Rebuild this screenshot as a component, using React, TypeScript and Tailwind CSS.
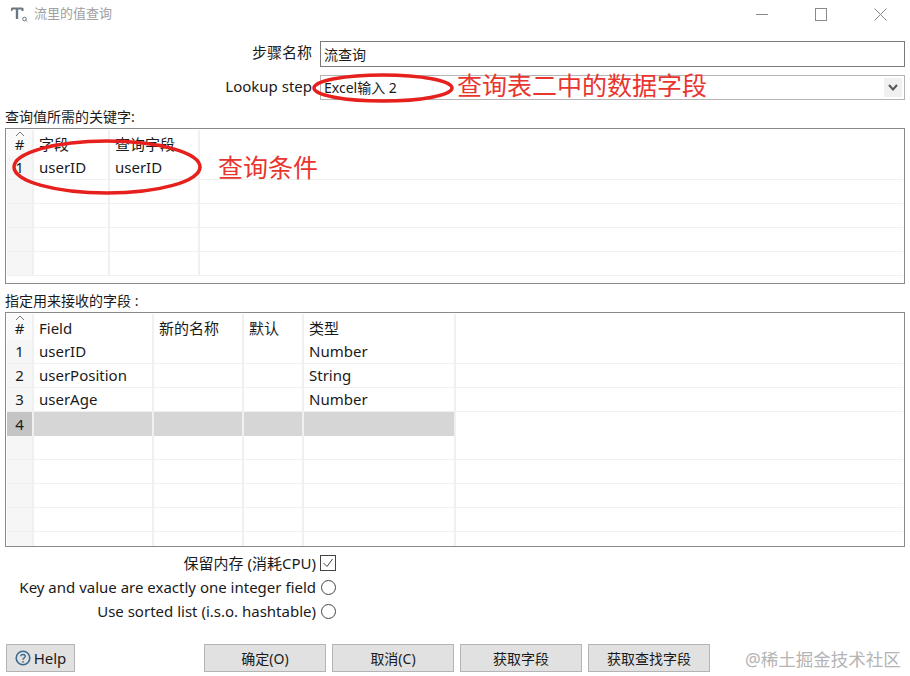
import React from "react";

const FONT = '"Noto Sans", "Noto Sans CJK SC", sans-serif';

type Col = { w: number; label: string };

function Grid({ cols, rows, totalRows, height, selected }: { cols: Col[]; rows: string[][]; totalRows: number; height: number; selected?: number }) {
  const all = Array.from({ length: totalRows }, (_, i) => rows[i] ?? []);
  return (
    <div className="mx-[5px] w-[900px] border border-[#8a8a8a] p-px overflow-hidden" style={{ height }}>
      <div className="flex h-[26px] items-end">
        <div className="relative flex h-full w-[27px] shrink-0 items-end justify-center border-r-2 border-[#f0f0f0] bg-[#fafafa] pb-[2px] leading-[20px]">
          <svg className="absolute left-[8px] top-[1px]" width="10" height="6" viewBox="0 0 10 6" fill="none" stroke="#777" strokeWidth="1"><path d="M1 5 L5 1 L9 5" /></svg>
          #
        </div>
        {cols.map((c) => (
          <div key={c.label} className="h-full shrink-0 border-r-2 border-[#f0f0f0] pl-[5px] pt-[2px] leading-[24px]" style={{ width: c.w }}>
            {c.label}
          </div>
        ))}
      </div>
      {all.map((r, i) => (
        <div key={i} className={`flex h-[24px] ${i === selected ? "" : "border-b border-[#f0f0f0]"}`}>
          <div className={`flex w-[27px] shrink-0 items-center justify-center border-r-2 border-[#f0f0f0] ${i === selected ? "bg-[#c4c4c4]" : "bg-[#f6f6f6]"}`}>
            {i < rows.length ? i + 1 : ""}
          </div>
          {cols.map((c, j) => (
            <div key={c.label} className={`flex shrink-0 items-center border-r-2 pl-[5px] ${i === selected ? "border-[#f0f0f0] bg-[#d6d6d6]" : "border-[#f0f0f0]"}`} style={{ width: c.w }}>
              {r[j] ?? ""}
            </div>
          ))}
        </div>
      ))}
    </div>
  );
}

function Btn({ children, w }: { children: React.ReactNode; w: string }) {
  return (
    <div className={`flex h-[28px] items-center justify-center border border-[#b4b4b4] bg-[#e1e1e1] text-[14px] ${w}`}>{children}</div>
  );
}

function OptRow({ label, children }: { label: string; children: React.ReactNode }) {
  return (
    <div className="flex h-[24px] items-center justify-end">
      <span className="whitespace-nowrap leading-[24px]">{label}</span>
      <span className="ml-[4px] flex w-[16px] justify-center">{children}</span>
    </div>
  );
}

export default function App() {
  return (
    <div className="relative flex h-[676px] w-[910px] flex-col overflow-hidden bg-white text-[15px] text-[#1a1a1a]" style={{ fontFamily: FONT }}>
      {/* title bar */}
      <div className="flex h-[28px] items-center pl-[11px]">
        <svg width="17" height="15" viewBox="0 0 17 15" fill="none" className="mr-[6px]">
          <path d="M0.5 1.5 H11.5 M0.5 1 V4 M11.5 1 V4" stroke="#6b7780" strokeWidth="2" />
          <path d="M6 1.5 V12" stroke="#6b7780" strokeWidth="2.4" />
          <circle cx="13.5" cy="12" r="1.8" stroke="#6b7780" strokeWidth="1" />
          <path d="M14.5 13 L16 14.5" stroke="#6b7780" strokeWidth="1" />
        </svg>
        <span className="text-[13px] text-[#a0a0a0]">流里的值查询</span>
        <div className="ml-auto mr-[23px] flex items-center gap-[47px]">
          <span className="h-px w-[12px] bg-[#8a8a8a]" />
          <span className="h-[13px] w-[12px] border border-[#8a8a8a]" />
          <svg width="13" height="13" viewBox="0 0 13 13" stroke="#8a8a8a" strokeWidth="1"><path d="M0.5 0.5 L12.5 12.5 M12.5 0.5 L0.5 12.5" /></svg>
        </div>
      </div>

      {/* step name */}
      <div className="mt-[13px] flex h-[26px] items-start">
        <span className="w-[312px] text-right leading-[22px]">步骤名称</span>
        <div className="ml-[8px] flex h-[26px] w-[585px] items-center border border-[#7a7a7a] pl-[3px] text-[14px]">流查询</div>
      </div>

      {/* lookup step */}
      <div className="mt-[8px] flex h-[25px] items-start">
        <span className="w-[312px] text-right leading-[22px]">Lookup step</span>
        <div className="ml-[8px] flex h-[25px] w-[585px] items-center border border-[#b4b4b4] pl-[3px] text-[14px]">
          Excel输入 2
          <span className="ml-auto mr-[2px] flex h-[19px] w-[18px] items-center justify-center bg-[#f0f0f0]">
            <svg width="10" height="7" viewBox="0 0 10 7" fill="none" stroke="#555" strokeWidth="2"><path d="M1 1 L5 5.5 L9 1" /></svg>
          </span>
        </div>
      </div>

      <div className="mt-[5px] h-[23px] pl-[5px] text-[14px] leading-[23px]">查询值所需的关键字:</div>
      <Grid cols={[{ w: 76, label: "字段" }, { w: 90, label: "查询字段" }]} rows={[["userID", "userID"]]} totalRows={5} height={156} />

      <div className="mt-[5px] h-[23px] pl-[5px] text-[14px] leading-[23px]">指定用来接收的字段 :</div>
      <Grid
        cols={[{ w: 120, label: "Field" }, { w: 90, label: "新的名称" }, { w: 60, label: "默认" }, { w: 152, label: "类型" }]}
        rows={[["userID", "", "", "Number"], ["userPosition", "", "", "String"], ["userAge", "", "", "Number"], ["", "", "", ""]]}
        totalRows={9}
        height={235}
        selected={3}
      />

      {/* options */}
      <div className="mt-[4px] w-[336px]">
        <OptRow label="保留内存 (消耗CPU)">
          <svg width="16" height="16" viewBox="0 0 16 16" fill="none"><rect x="0.5" y="0.5" width="15" height="15" stroke="#444" /><path d="M3.5 8 L7 11.5 L12.5 4" stroke="#444" /></svg>
        </OptRow>
        <OptRow label="Key and value are exactly one integer field">
          <span className="h-[15px] w-[15px] rounded-full border border-[#444]" />
        </OptRow>
        <OptRow label="Use sorted list (i.s.o. hashtable)">
          <span className="h-[15px] w-[15px] rounded-full border border-[#444]" />
        </OptRow>
      </div>

      {/* buttons */}
      <div className="mt-[21px] flex pl-[6px]">
        <Btn w="w-[69px] !text-[15px]">
          <svg width="16" height="16" viewBox="0 0 16 16" fill="none" className="mr-[3px]">
            <circle cx="8" cy="8" r="6.8" stroke="#3d6a8f" strokeWidth="1.6" />
            <path d="M5.8 6.3 C5.8 3.8 10.2 3.8 10.2 6.3 C10.2 8 8 7.8 8 9.8" stroke="#3d6a8f" strokeWidth="1.4" />
            <circle cx="8" cy="11.8" r="0.9" fill="#3d6a8f" />
          </svg>
          Help
        </Btn>
        <div className="ml-[129px] flex gap-[6px]">
          <Btn w="w-[122px]">确定(O)</Btn>
          <Btn w="w-[122px]">取消(C)</Btn>
          <Btn w="w-[122px]">获取字段</Btn>
          <Btn w="w-[122px]">获取查找字段</Btn>
        </div>
      </div>

      {/* annotations on top of the screenshot */}
      <svg className="pointer-events-none absolute left-0 top-0" width="910" height="676" fill="none" stroke="#e6201c">
        <ellipse cx="383" cy="88" rx="69" ry="13" strokeWidth="3.5" />
        <ellipse cx="107" cy="167" rx="93" ry="26" strokeWidth="3.5" />
      </svg>
      <span className="absolute left-[457px] top-[68px] whitespace-nowrap text-[25px] leading-[34px] text-[#e8352e]">查询表二中的数据字段</span>
      <span className="absolute left-[218px] top-[150px] whitespace-nowrap text-[25px] leading-[34px] text-[#e8352e]">查询条件</span>
      <span className="absolute left-[745px] top-[646px] whitespace-nowrap text-[17.5px] leading-[26px] text-[#b4b4b4]">@稀土掘金技术社区</span>
    </div>
  );
}
